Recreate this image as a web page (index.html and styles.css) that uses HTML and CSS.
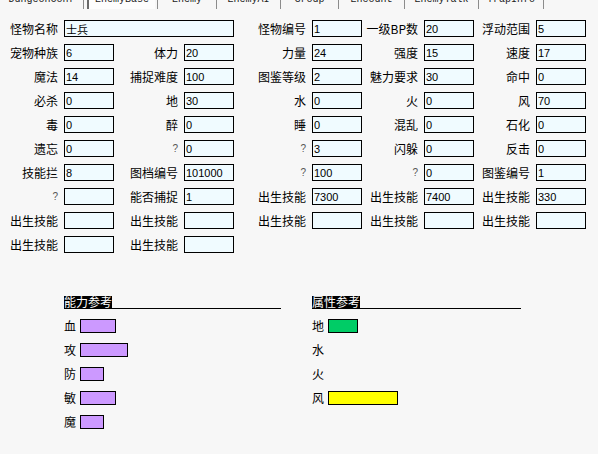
FILE: index.html
```html
<!DOCTYPE html>
<html lang="zh-CN">
<head>
<meta charset="utf-8">
<title>EnemyBase</title>
<link rel="stylesheet" href="styles.css">
</head>
<body>
<nav class="tabs">
  <span class="tab tab-first"><span class="tab-label">DungeonConf</span></span>
  <span class="tab tab-active"><span class="tab-label">EnemyBase</span></span>
  <span class="tab tab-w59"><span class="tab-label">Enemy</span></span>
  <span class="tab tab-w64"><span class="tab-label">EnemyAI</span></span>
  <span class="tab tab-w58"><span class="tab-label">Group</span></span>
  <span class="tab tab-w66"><span class="tab-label">Encount</span></span>
  <span class="tab tab-w74"><span class="tab-label">EnemyTalk</span></span>
  <span class="tab tab-w65"><span class="tab-label">TrapInfo</span></span>
  <span class="tab tab-w60"><span class="tab-label"></span></span>
</nav>

<form class="sheet">
  <label class="lbl">怪物名称</label><input class="fld fld-wide" value="士兵">
  <label class="lbl">怪物编号</label><input class="fld" value="1">
  <label class="lbl">一级BP数</label><input class="fld" value="20">
  <label class="lbl">浮动范围</label><input class="fld" value="5">

  <label class="lbl">宠物种族</label><input class="fld" value="6">
  <label class="lbl">体力</label><input class="fld" value="20">
  <label class="lbl">力量</label><input class="fld" value="24">
  <label class="lbl">强度</label><input class="fld" value="15">
  <label class="lbl">速度</label><input class="fld" value="17">

  <label class="lbl">魔法</label><input class="fld" value="14">
  <label class="lbl">捕捉难度</label><input class="fld" value="100">
  <label class="lbl">图鉴等级</label><input class="fld" value="2">
  <label class="lbl">魅力要求</label><input class="fld" value="30">
  <label class="lbl">命中</label><input class="fld" value="0">

  <label class="lbl">必杀</label><input class="fld" value="0">
  <label class="lbl">地</label><input class="fld" value="30">
  <label class="lbl">水</label><input class="fld" value="0">
  <label class="lbl">火</label><input class="fld" value="0">
  <label class="lbl">风</label><input class="fld" value="70">

  <label class="lbl">毒</label><input class="fld" value="0">
  <label class="lbl">醉</label><input class="fld" value="0">
  <label class="lbl">睡</label><input class="fld" value="0">
  <label class="lbl">混乱</label><input class="fld" value="0">
  <label class="lbl">石化</label><input class="fld" value="0">

  <label class="lbl">遗忘</label><input class="fld" value="0">
  <label class="lbl lbl-q">?</label><input class="fld" value="0">
  <label class="lbl lbl-q">?</label><input class="fld" value="3">
  <label class="lbl">闪躲</label><input class="fld" value="0">
  <label class="lbl">反击</label><input class="fld" value="0">

  <label class="lbl">技能拦</label><input class="fld" value="8">
  <label class="lbl">图档编号</label><input class="fld" value="101000">
  <label class="lbl lbl-q">?</label><input class="fld" value="100">
  <label class="lbl lbl-q">?</label><input class="fld" value="0">
  <label class="lbl">图鉴编号</label><input class="fld" value="1">

  <label class="lbl lbl-q">?</label><input class="fld" value="">
  <label class="lbl">能否捕捉</label><input class="fld" value="1">
  <label class="lbl">出生技能</label><input class="fld" value="7300">
  <label class="lbl">出生技能</label><input class="fld" value="7400">
  <label class="lbl">出生技能</label><input class="fld" value="330">

  <label class="lbl">出生技能</label><input class="fld" value="">
  <label class="lbl">出生技能</label><input class="fld" value="">
  <label class="lbl">出生技能</label><input class="fld" value="">
  <label class="lbl">出生技能</label><input class="fld" value="">
  <label class="lbl">出生技能</label><input class="fld" value="">

  <label class="lbl">出生技能</label><input class="fld" value="">
  <label class="lbl">出生技能</label><input class="fld" value="">
</form>

<section class="refs">
  <div class="ref ref-stats">
    <h3 class="ref-head"><span class="ref-title">能力参考</span></h3>
    <ul class="bars">
      <li class="bar-row"><span class="bar-lbl">血</span><span class="bar bar-stat" style="width:36px"></span></li>
      <li class="bar-row"><span class="bar-lbl">攻</span><span class="bar bar-stat" style="width:48px"></span></li>
      <li class="bar-row"><span class="bar-lbl">防</span><span class="bar bar-stat" style="width:24px"></span></li>
      <li class="bar-row"><span class="bar-lbl">敏</span><span class="bar bar-stat" style="width:36px"></span></li>
      <li class="bar-row"><span class="bar-lbl">魔</span><span class="bar bar-stat" style="width:24px"></span></li>
    </ul>
  </div>
  <div class="ref ref-elem">
    <h3 class="ref-head"><span class="ref-title">属性参考</span></h3>
    <ul class="bars">
      <li class="bar-row"><span class="bar-lbl">地</span><span class="bar bar-earth" style="width:30px"></span></li>
      <li class="bar-row"><span class="bar-lbl">水</span></li>
      <li class="bar-row"><span class="bar-lbl">火</span></li>
      <li class="bar-row"><span class="bar-lbl">风</span><span class="bar bar-wind" style="width:70px"></span></li>
    </ul>
  </div>
</section>
</body>
</html>
```

FILE: styles.css
```css
html, body {
  margin: 0;
  padding: 0;
  background: #f7f7f7;
}

body {
  width: 598px;
  height: 454px;
  overflow: hidden;
  font-family: "Noto Sans CJK SC", "Liberation Sans", sans-serif;
  font-size: 12px;
  color: #000;
}

/* ---- tab strip (scrolled so only the lower edge shows) ---- */
.tabs {
  display: flex;
  height: 9px;
  overflow: hidden;
}

.tab {
  flex: none;
  box-sizing: border-box;
  border-left: 1px solid #8c8c8c;
  text-align: center;
  overflow: hidden;
}

.tab-label {
  display: block;
  margin-top: -5px;
  font-family: "Liberation Mono", monospace;
  font-size: 10px;
  line-height: 10px;
  color: #222;
  white-space: nowrap;
}

.tab-first {
  width: 84px;
  border-left: none;
  border-right: 1px solid #8c8c8c;
}

.tab-active {
  width: 68px;
  margin-left: 3px;
  margin-right: 2px;
  border-left: 2px solid #6a6a6a;
  background: #fdfdfd;
}

.tab-w59 { width: 59px; }
.tab-w64 { width: 64px; }
.tab-w58 { width: 58px; }
.tab-w66 { width: 66px; }
.tab-w74 { width: 74px; }
.tab-w65 { width: 65px; }
.tab-w60 { width: 60px; }

/* ---- record form ---- */
.sheet {
  display: grid;
  grid-template-columns: 64px 50px 70px 50px 78px 50px 62px 50px 62px 50px;
  grid-auto-rows: 17px;
  row-gap: 7px;
  margin: 11px 0 0;
}

.lbl {
  align-self: center;
  padding-right: 6px;
  text-align: right;
  white-space: nowrap;
  line-height: 17px;
  font-size: 12px;
}

.lbl-q {
  font-family: "Liberation Sans", sans-serif;
  font-size: 10px;
  color: #555;
}

.fld {
  box-sizing: border-box;
  width: 50px;
  height: 17px;
  margin: 0;
  padding: 0 1px;
  border: 1px solid #000;
  border-radius: 0;
  background: #f0fbff;
  font-family: "Liberation Sans", "Noto Sans CJK SC", sans-serif;
  font-size: 11px;
  color: #000;
  outline: none;
}

.fld-wide {
  grid-column: 2 / 5;
  width: 170px;
}

/* ---- reference charts ---- */
.refs {
  display: flex;
  gap: 31px;
  margin-top: 43px;
  padding-left: 64px;
}

.ref-stats { width: 217px; }
.ref-elem { width: 209px; }

.ref-head {
  display: flex;
  margin: 0;
  border-bottom: 1px solid #000;
  font-size: 12px;
  font-weight: normal;
}

.ref-title {
  height: 12px;
  line-height: 12px;
  background: #000;
  color: #fff;
}

.bars {
  display: flex;
  flex-direction: column;
  gap: 10px;
  margin: 10px 0 0;
  padding: 0;
  list-style: none;
}

.bar-row {
  display: flex;
  align-items: center;
  gap: 4px;
  height: 14px;
}

.bar-lbl {
  width: 12px;
  line-height: 14px;
  font-size: 12px;
}

.bar {
  box-sizing: border-box;
  height: 14px;
  border: 1px solid #000;
}

.bar-stat { background: #cc99ff; }
.bar-earth { background: #00cc66; }
.bar-wind { background: #ffff00; }
```
